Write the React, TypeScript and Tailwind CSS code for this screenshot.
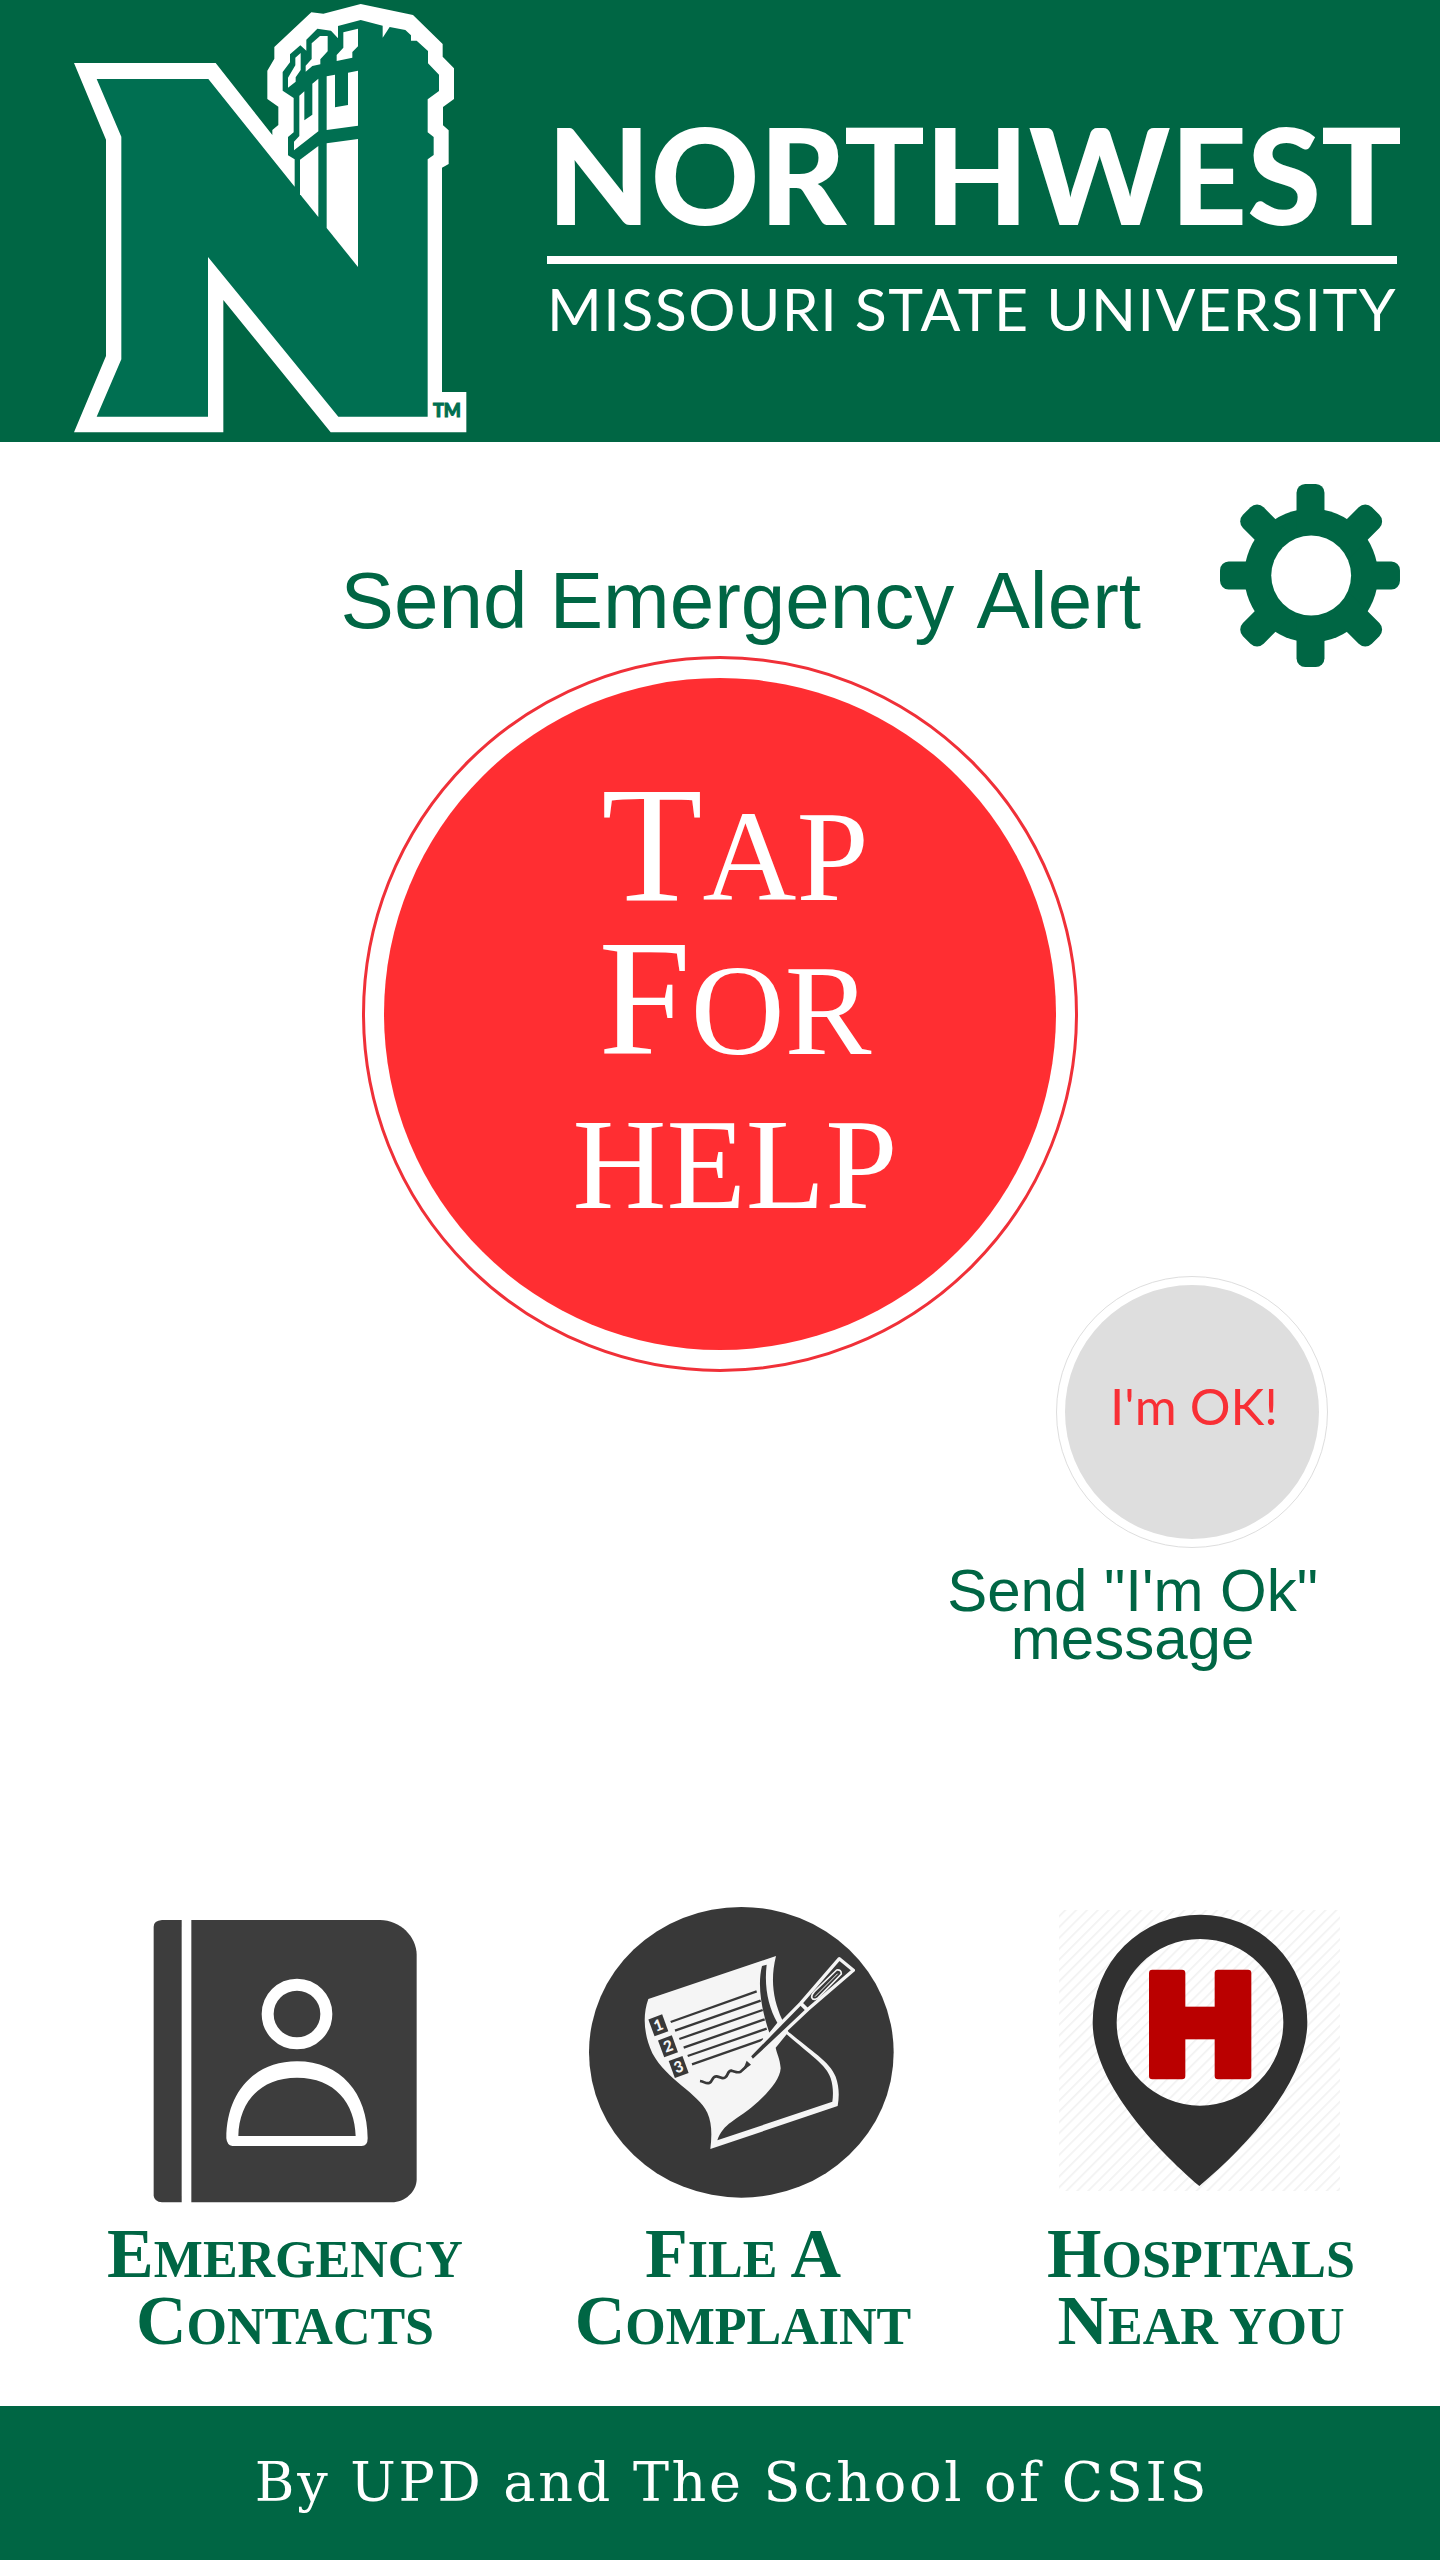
import type { ReactNode } from "react";

function UniversityMark() {
  return (
    <svg viewBox="0 0 1260 1326" className="block w-[420px] shrink-0" role="img" aria-label="Northwest logo">
      <path
        fill="#fff"
        d="M42 189H467L637 405V390L655 375V320L622 297V212L643 176V141L754 37L790 41L902 12L1059 45L1148 132V170L1182 205V297L1149 321V376L1166 391V492L1146 503V1176H1219V1297H812L490 900V1297H42L138 1068V419Z"
      />
      <path
        fill="#006f51"
        d="M110 237H445L704 560V478L684 466V411L701 397V294L668 272V216L690 187V163L721 136L739 152V119L772 86L813 92L834 115V78L902 60L968 77V113L989 81L1036 90L1053 106V122H1070L1104 153V190L1137 224V273L1103 298V397L1121 411V465L1103 478V1250H835L444 771V1250H110L184 1078V410Z"
      />
      <g fill="#fff">
        <path d="M722 159V210L707 232V245L684 263V233L706 196V173Z" />
        <path d="M780 108H803V154L781 178V193L757 198L737 215V197L755 177V130Z" />
        <path d="M894 86V139L877 156V173L830 183V165L850 143V97Z" />
        <path d="M718 287L733 274V361L757 344V251L775 236V394L702 451V425L718 408Z" />
        <path d="M800 229L825 224V322L864 315V218L894 212V377L800 390Z" />
        <path d="M720 479L775 438V651L720 583Z" />
        <path d="M800 430L894 417V801L800 684Z" />
      </g>
      <text x="1119" y="1250" fill="#006f51" stroke="#006f51" strokeWidth="3" fontFamily="Lato, sans-serif" fontWeight="900" fontSize="54">
        TM
      </text>
    </svg>
  );
}

function GearIcon() {
  return (
    <svg viewBox="60 72 541 550" className="block w-[180px]" fill="#006644" aria-hidden="true">
      <mask id="gear-hole">
        <rect x="0" y="0" width="700" height="700" fill="#fff" />
        <circle cx="334" cy="347" r="120" fill="#000" />
      </mask>
      <g mask="url(#gear-hole)">
        <circle cx="334" cy="347" r="201" />
        <rect x="290" y="72" width="84" height="550" rx="26" />
        <rect x="60" y="305" width="541" height="84" rx="26" />
        <rect x="60" y="303" width="548" height="88" rx="28" transform="rotate(45 334 347)" />
        <rect x="60" y="303" width="548" height="88" rx="28" transform="rotate(-45 334 347)" />
      </g>
    </svg>
  );
}

function ContactsIcon() {
  return (
    <svg viewBox="105 45 960 900" className="block w-[320px]" aria-hidden="true">
      <path fill="#3d3d3d" d="M275 90H216Q191 92 191 110V917Q193 935 216 937H275Z" />
      <path fill="#3d3d3d" d="M304 90H870C930 90 980 140 980 195V868C980 905 945 937 905 937H304Z" />
      <circle cx="621" cy="372" r="88" fill="none" stroke="#fff" strokeWidth="36" />
      <path
        fill="#fff"
        fillRule="evenodd"
        d="M409 745C409 610 490 514 621 514S833 610 833 745Q833 768 815 768H427Q411 766 409 745ZM445 738H797C795 640 735 563 621 563S447 640 445 738Z"
      />
    </svg>
  );
}

function ComplaintIcon() {
  const lines = [
    [302, 396, 560, 304],
    [315, 422, 572, 332],
    [328, 447, 578, 360],
    [341, 473, 584, 388],
    [353, 498, 590, 416],
    [366, 523, 580, 448],
  ];
  const numbers = [
    { label: "1", x: 265, y: 406 },
    { label: "2", x: 294, y: 469 },
    { label: "3", x: 326, y: 531 },
  ];
  return (
    <svg viewBox="39 45 960 900" className="block w-[320px]" aria-hidden="true">
      <ellipse cx="514" cy="487" rx="457" ry="436" fill="#383838" />
      <path
        fill="#f5f5f5"
        d="M235 327L618 198C600 270 610 330 636 388L655 425C720 480 780 515 797 560C808 590 808 620 803 648L421 777C426 735 426 700 412 668C385 610 290 570 247 490C220 430 218 375 235 327Z"
      />
      <path fill="#383838" d="M590 224C582 290 595 350 622 398L598 428C578 370 560 290 576 228Z" />
      <path
        fill="#383838"
        d="M650 433C720 495 770 525 782 565C790 590 790 615 787 635L442 751C460 700 500 690 545 652C590 615 630 570 632 535C630 505 620 490 617 473Z"
      />
      {lines.map(([x1, y1, x2, y2]) => (
        <line key={y1} x1={x1} y1={y1} x2={x2} y2={y2} stroke="#383838" strokeWidth="7" />
      ))}
      {numbers.map(({ label, x, y }) => (
        <g key={label} transform={`rotate(-20 ${x} ${y})`}>
          <rect x={x - 22} y={y - 27} width="44" height="54" fill="#383838" />
          <text x={x} y={y + 16} textAnchor="middle" fill="#f5f5f5" fontFamily="Lato, sans-serif" fontWeight="900" fontSize="46">
            {label}
          </text>
        </g>
      ))}
      <path
        d="M390 573C405 575 405 582 418 579C430 573 425 558 440 559C455 562 455 568 466 562C477 553 472 541 485 542C500 546 500 550 512 545L528 530"
        fill="none"
        stroke="#383838"
        strokeWidth="8"
      />
      <path fill="#383838" stroke="#f5f5f5" strokeWidth="10" strokeLinejoin="round" d="M808 206L850 241L714 358L548 514L537 498L692 340Z" />
      <path fill="#f5f5f5" d="M535 500L550 515L540 524L528 512Z" />
      <path fill="#383838" d="M530 512L543 524L518 542Z" />
      <path stroke="#f5f5f5" strokeWidth="11" d="M690 338L714 362" />
      <path fill="none" stroke="#f5f5f5" strokeWidth="5" strokeLinejoin="round" d="M800 240Q814 238 814 252L745 323Q730 334 725 322Q724 315 733 305Z" />
      <path fill="none" stroke="#f5f5f5" strokeWidth="3" d="M735 320L803 251" />
    </svg>
  );
}

function HospitalIcon() {
  return (
    <svg viewBox="33 45 960 900" className="block w-[320px]" aria-hidden="true">
      <defs>
        <pattern id="pin-stripes" width="23" height="23" patternUnits="userSpaceOnUse" patternTransform="rotate(45)">
          <rect width="5" height="23" fill="#808080" fillOpacity="0.1" />
        </pattern>
      </defs>
      <rect x="87" y="60" width="843" height="843" fill="url(#pin-stripes)" />
      <path
        fill="#303030"
        fillRule="evenodd"
        d="M508 888C360 760 188 570 188 396A322 322 0 0 1 832 396C832 570 660 760 508 888ZM510 147A250 250 0 1 0 510 647A250 250 0 1 0 510 147Z"
      />
      <g fill="#ba0000">
        <rect x="357" y="239" width="109" height="329" rx="10" />
        <rect x="554" y="239" width="110" height="329" rx="10" />
        <rect x="450" y="350" width="120" height="98" />
      </g>
    </svg>
  );
}

/* A word set as a tall initial followed by smaller capitals. */
function LabelWord({ children }: { children: string }) {
  return <span className="inline-block first-letter:text-[70px] first-letter:leading-[0px]">{children}</span>;
}

function MenuItem({ icon, children }: { icon: ReactNode; children: ReactNode }) {
  return (
    <a href="#" className="flex flex-col items-center gap-[21px]">
      {icon}
      <span className="text-center font-['Liberation_Serif',serif] text-[52px] leading-[67px] font-bold text-[#006644] uppercase">
        {children}
      </span>
    </a>
  );
}

export default function App() {
  const helpLine = "block first-letter:text-[166px] first-letter:leading-[0px]";
  return (
    <div className="flex min-h-screen flex-col bg-white font-['Liberation_Sans',sans-serif] text-[#006644]">
      <header className="flex items-start gap-[67px] bg-[#006644] pr-[43px] pl-[60px] text-white">
        <UniversityMark />
        <div className="min-w-0 flex-1 pt-[92px] font-['Lato',sans-serif] whitespace-nowrap">
          <h1 className="text-[134px] leading-[164px] font-black">NORTHWEST</h1>
          <div className="h-2 bg-white" />
          <p className="pt-[10px] text-[59px] leading-[70px] tracking-wide">MISSOURI STATE UNIVERSITY</p>
        </div>
      </header>

      <main className="flex flex-1 flex-col">
        <div className="flex items-start justify-end gap-[79px] pt-[42px] pr-10">
          <h2 className="mt-[77px] text-[80px] leading-[80px] [font-kerning:none]">Send Emergency Alert</h2>
          <button type="button" aria-label="Settings">
            <GearIcon />
          </button>
        </div>

        <button
          type="button"
          className="-mt-[11px] size-[716px] self-center rounded-full border-3 border-[#f03038] bg-white p-[19px]"
        >
          <span className="flex size-full flex-col items-center justify-center rounded-full bg-[#ff2e32] pb-2 pl-[30px] font-['Liberation_Serif',serif] text-[130px] leading-[154px] text-white uppercase">
            <span className={helpLine}>Tap</span>
            <span className={helpLine}>For</span>
            <span className="block">help</span>
          </span>
        </button>

        <section className="-mt-24 flex flex-col items-end">
          <button
            type="button"
            aria-describedby="ok-caption"
            className="mr-28 size-[272px] rounded-full border border-[#dedede] bg-white p-2"
          >
            <span className="flex size-full items-center justify-center rounded-full bg-[#dedede] pb-3 pl-1 font-['Lato',sans-serif] text-[51px] leading-[60px] text-[#f82f35]">
              I'm OK!
            </span>
          </button>
          <p id="ok-caption" className="mt-[19px] mr-[122px] text-center text-[60px] leading-[48px]">
            Send "I'm Ok"
            <br />
            message
          </p>
        </section>

        <nav className="mt-auto grid grid-cols-3 pt-16 pr-[10px] pb-[46px] pl-14">
          <MenuItem icon={<ContactsIcon />}>
            <LabelWord>Emergency</LabelWord>
            <br />
            <LabelWord>Contacts</LabelWord>
          </MenuItem>
          <MenuItem icon={<ComplaintIcon />}>
            <LabelWord>File</LabelWord> <LabelWord>A</LabelWord>
            <br />
            <LabelWord>Complaint</LabelWord>
          </MenuItem>
          <MenuItem icon={<HospitalIcon />}>
            <LabelWord>Hospitals</LabelWord>
            <br />
            <LabelWord>Near</LabelWord> you
          </MenuItem>
        </nav>
      </main>

      <footer className="bg-[#006644] py-10 pl-6 text-center font-['DejaVu_Serif',serif] text-[54px] leading-[74px] tracking-wider text-white">
        By UPD and The School of CSIS
      </footer>
    </div>
  );
}
